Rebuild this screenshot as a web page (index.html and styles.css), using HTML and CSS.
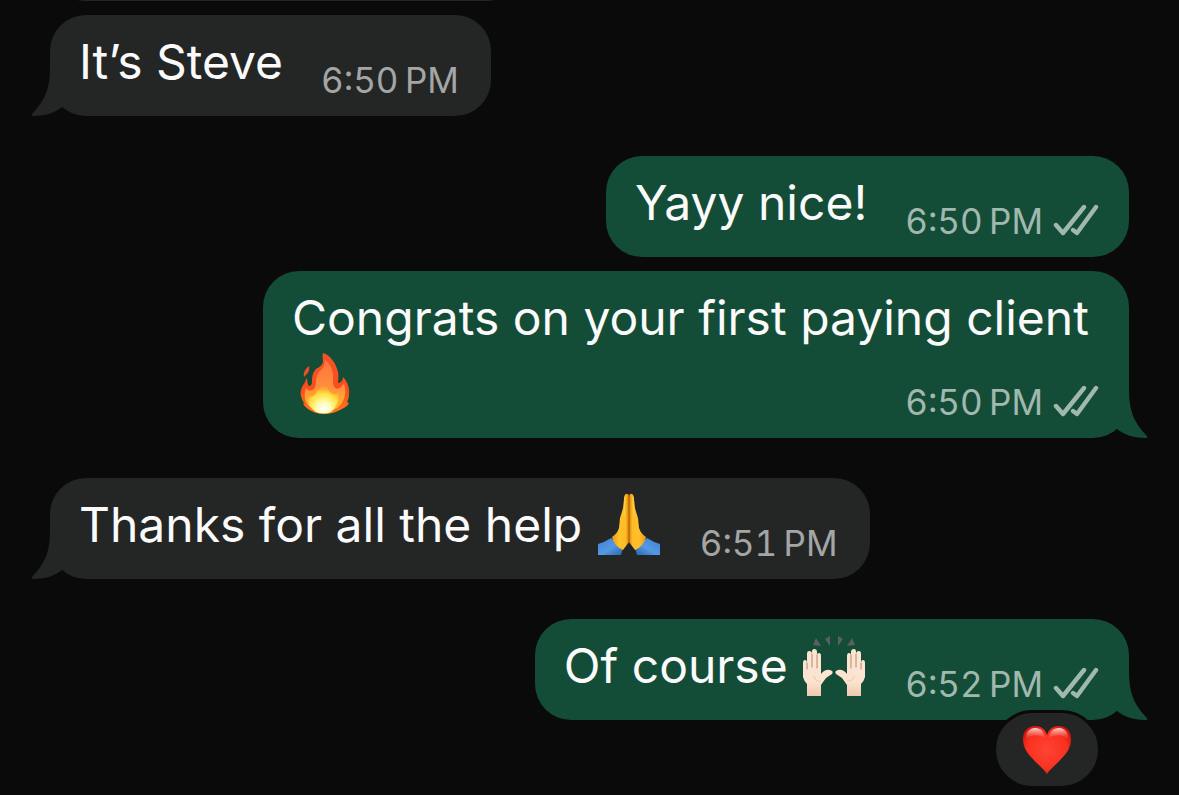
FILE: index.html
```html
<!DOCTYPE html>
<html lang="en">
<head>
    <meta charset="UTF-8">
    <meta name="viewport" content="width=device-width, initial-scale=1.0">
    <title>Chat</title>
    <link rel="stylesheet" href="styles.css">
</head>
<body>
    <!-- Shared shapes -->
    <svg class="defs" aria-hidden="true">
        <defs>
            <linearGradient id="fireOuter" x1="0" y1="0" x2="0" y2="1">
                <stop offset="0" stop-color="#f5522a"/>
                <stop offset="0.6" stop-color="#fa4d1c"/>
                <stop offset="1" stop-color="#ff7a1c"/>
            </linearGradient>
            <linearGradient id="fireMid" x1="0" y1="0" x2="0" y2="1">
                <stop offset="0" stop-color="#ff7440"/>
                <stop offset="0.5" stop-color="#ff8c3c"/>
                <stop offset="1" stop-color="#ffc02e"/>
            </linearGradient>
            <radialGradient id="fireCore" cx="0.5" cy="0.85" r="0.75">
                <stop offset="0" stop-color="#ffffff"/>
                <stop offset="0.3" stop-color="#fffbb0"/>
                <stop offset="0.65" stop-color="#ffe03c"/>
                <stop offset="1" stop-color="#ffb52e" stop-opacity="0"/>
            </radialGradient>
            <linearGradient id="palm" x1="0" y1="0" x2="1" y2="0">
                <stop offset="0" stop-color="#f09a12"/>
                <stop offset="0.45" stop-color="#ffc12c"/>
                <stop offset="0.8" stop-color="#ffbb25"/>
                <stop offset="1" stop-color="#d98208"/>
            </linearGradient>
            <linearGradient id="sleeve" x1="0" y1="0" x2="1" y2="1">
                <stop offset="0" stop-color="#3f7fd0"/>
                <stop offset="0.55" stop-color="#5599e4"/>
                <stop offset="1" stop-color="#2b62ad"/>
            </linearGradient>
            <linearGradient id="skin" x1="0" y1="0" x2="0" y2="1">
                <stop offset="0" stop-color="#fbe6d3"/>
                <stop offset="0.7" stop-color="#fbe3d0"/>
                <stop offset="1" stop-color="#efc8ac"/>
            </linearGradient>
            <radialGradient id="heartFill" cx="0.5" cy="0.5" r="0.6">
                <stop offset="0" stop-color="#ff4433"/>
                <stop offset="0.7" stop-color="#f9301f"/>
                <stop offset="1" stop-color="#cf1208"/>
            </radialGradient>
            <linearGradient id="heartShine" x1="0" y1="0" x2="0" y2="1">
                <stop offset="0" stop-color="#ffe3e0" stop-opacity="0.95"/>
                <stop offset="1" stop-color="#ff5a4a" stop-opacity="0"/>
            </linearGradient>
            <g id="prayHand">
                <path d="M2 52Q9 50 15 46L27 56L25 63H2Z" fill="url(#sleeve)"/>
                <path d="M33 4Q32 1 30 2Q28 3 28 7L27 16Q26 20 24 26L23 36Q21 42 16 45Q18 54 27 58L33 50Z" fill="url(#palm)"/>
                <path d="M29 5L28 24" stroke="#ffd765" stroke-width="1" fill="none" opacity="0.7"/>
            </g>
            <g id="raisedHand">
                <path d="M15 5L12 12L20 13ZM24 6L29 3L29 13Z" fill="#5b605e"/>
                <path d="M2 30Q2 27 4 27Q6 27 6 30V21Q6 18 8 18Q11 18 11 21V19Q11 16 13 16Q16 16 16 19V22Q16 20 18 20Q20 20 20 23V41Q24 36 29 37Q33 38 31 41L25 45Q22 49 20 52V63H6V51Q3 48 2 44Z" fill="url(#skin)"/>
                <path d="M6 30V36M11 21V34M16 22V35" stroke="#b08a6c" stroke-width="1" stroke-linecap="round" fill="none"/>
                <path d="M13 43Q14 49 20 48" stroke="#ecc6ac" stroke-width="1" fill="none"/>
            </g>
        </defs>
        <symbol id="tail" viewBox="0 0 36 50">
            <path d="M20 0C20 24 15 34 2 48Q1 50 4 50C16 50 26 46 32 41L36 20V0Z" fill="currentColor"/>
        </symbol>
        <symbol id="ticks" viewBox="0 0 46 32">
            <path d="M3 21L10 29L31 3M20 26L24 29L43 3" fill="none" stroke="currentColor" stroke-width="4.4" stroke-linecap="round" stroke-linejoin="round"/>
        </symbol>
    </svg>

    <main class="chat">
        <!-- Scrolled out of view, only the bottom edge shows -->
        <div class="bubble incoming scrolled"></div>

        <div class="bubble incoming spaced-sm">
            <p class="text">It’s Steve</p>
            <span class="meta"><time>6:50&#8201;PM</time></span>
            <svg class="tail" aria-hidden="true"><use href="#tail"/></svg>
        </div>

        <div class="bubble outgoing">
            <p class="text">Yayy nice!</p>
            <span class="meta"><time>6:50&#8201;PM</time><svg class="ticks" role="img" aria-label="Delivered"><use href="#ticks"/></svg></span>
        </div>

        <div class="bubble outgoing wrapped spaced-sm">
            <p class="text">Congrats on your first paying client
                <svg class="emoji" viewBox="0 0 66 64" role="img" aria-label="Fire">
                    <path d="M31 2C38 4 44 12 46 21C47 26 46 31 46 32C49 32 51 29 51 26C55 30 58 37 57 43C57 47 56 49 55 51L57 52C54 57 51 57 50 58C45 61 38 63 32 63C26 63 20 61 16 58C14 56 12 55 11 52L13 53C9 48 8 43 9 39C10 34 14 32 14 27C16 29 15 33 17 35C19 35 20 33 20 31C20 25 21 21 24 18C27 16 30 15 31 11C31 8 30 5 31 2Z" fill="url(#fireOuter)"/>
                    <path d="M17 15C18 20 16 22 12 26C11 22 13 18 17 15Z" fill="#f24b28"/>
                    <path d="M33 9C40 14 42 23 41 31C41 36 44 39 48 37C50 35 52 33 52 32C55 42 53 51 45 57C36 62 24 61 17 55C12 50 12 42 14 37C17 41 22 40 23 36C25 31 23 26 27 21C31 18 33 14 33 9Z" fill="url(#fireMid)"/>
                    <path d="M32 31C36 36 36 41 41 43C44 44 46 42 47 41C48 49 44 57 39 61Q32 64 24 61C17 57 15 50 17 45C22 46 24 43 25 39C27 35 30 35 32 31Z" fill="url(#fireCore)"/>
                </svg>
            </p>
            <span class="meta"><time>6:50&#8201;PM</time><svg class="ticks" role="img" aria-label="Delivered"><use href="#ticks"/></svg></span>
            <svg class="tail" aria-hidden="true"><use href="#tail"/></svg>
        </div>

        <div class="bubble incoming">
            <p class="text">Thanks for all the help
                <svg class="emoji" viewBox="0 0 66 64" role="img" aria-label="Folded hands">
                    <use href="#prayHand"/>
                    <use href="#prayHand" transform="translate(66 0) scale(-1 1)"/>
                    <path d="M33 4V50" stroke="#a85f05" stroke-width="1"/>
                </svg>
            </p>
            <span class="meta"><time>6:51&#8201;PM</time></span>
            <svg class="tail" aria-hidden="true"><use href="#tail"/></svg>
        </div>

        <div class="bubble outgoing">
            <p class="text">Of course
                <svg class="emoji" viewBox="0 0 66 64" role="img" aria-label="Raised hands">
                    <use href="#raisedHand"/>
                    <use href="#raisedHand" transform="translate(66 0) scale(-1 1)"/>
                </svg>
            </p>
            <span class="meta"><time>6:52&#8201;PM</time><svg class="ticks" role="img" aria-label="Delivered"><use href="#ticks"/></svg></span>
            <svg class="tail" aria-hidden="true"><use href="#tail"/></svg>
            <button class="reaction" type="button" aria-label="Heart reaction">
                <svg class="heart" viewBox="0 0 50 50" aria-hidden="true">
                    <path d="M25 49C22 44 16 40 10 33C4 27 1 21 1 14C1 6 6 1 13 1C19 1 23 4 25 10C27 4 31 1 37 1C44 1 49 6 49 14C49 21 46 27 40 33C34 40 28 44 25 49Z" fill="url(#heartFill)"/>
                    <path d="M4 15C3 7 8 3 13 3C19 3 22 7 23 13C17 9 8 9 4 15ZM46 15C47 7 42 3 37 3C31 3 28 7 27 13C33 9 42 9 46 15Z" fill="url(#heartShine)"/>
                </svg>
            </button>
        </div>
    </main>
</body>
</html>
```

FILE: styles.css
```css
body {
    margin: 0;
    background-color: #0a0a0a;
    font-family: Inter, "Liberation Sans", sans-serif;
}
.defs {
    position: absolute;
    width: 0;
    height: 0;
}
.chat {
    display: flex;
    flex-direction: column;
    padding: 0 50px;
    min-height: 100vh;
    box-sizing: border-box;
    overflow: hidden;
}
.bubble {
    position: relative;
    display: flex;
    align-items: flex-end;
    gap: 38px;
    box-sizing: border-box;
    max-width: 866px;
    margin-top: 40px;
    padding: 14px 30px 18px 29px;
    border-radius: 36px;
}
.incoming {
    align-self: flex-start;
    padding-right: 32px;
    background-color: #242626;
    color: #242626;
}
.outgoing {
    align-self: flex-end;
    background-color: #144d37;
    color: #144d37;
}
.spaced-sm {
    margin-top: 14px;
}
.scrolled {
    width: 472px;
    height: 101px;
    margin-top: -100px;
}
.text {
    margin: 0 0 3px;
    color: #fafafa;
    font-size: 48px;
    line-height: 66px;
}
.emoji {
    width: 66px;
    height: 64px;
    margin: -8px 0;
    vertical-align: -6px;
}
.meta {
    display: flex;
    align-items: flex-end;
    gap: 10px;
    color: #a4a6a5;
    font-size: 35px;
    font-variant-numeric: tabular-nums;
    line-height: 36px;
    white-space: nowrap;
}
.outgoing .meta {
    color: #a1b8af;
}
.ticks {
    width: 46px;
    height: 32px;
    margin-bottom: 3px;
}

/* Time sits on the last line of the text */
.wrapped {
    display: grid;
}
.wrapped .text,
.wrapped .meta {
    grid-area: 1 / 1;
}
.wrapped .meta {
    align-self: end;
    justify-self: end;
}
.tail {
    position: absolute;
    bottom: 0;
    left: -20px;
    width: 36px;
    height: 50px;
}
.outgoing .tail {
    left: auto;
    right: -20px;
    transform: scaleX(-1);
}
.reaction {
    position: absolute;
    right: 28px;
    bottom: -69px;
    display: flex;
    align-items: center;
    justify-content: center;
    width: 108px;
    height: 79px;
    padding: 0;
    border: 3px solid #0a0a0a;
    border-radius: 40px;
    background-color: #242626;
}
.heart {
    width: 50px;
    height: 50px;
}
```
